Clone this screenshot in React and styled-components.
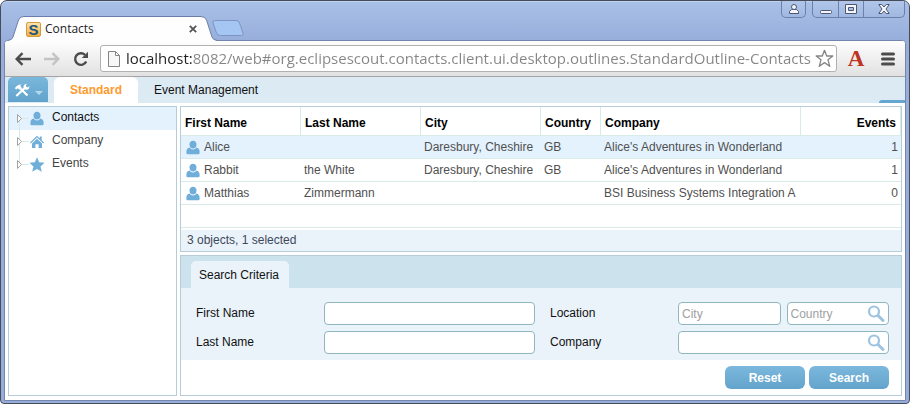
import React from "react";
import styled, { createGlobalStyle } from "styled-components";

const GlobalStyle = createGlobalStyle`
  *, *::before, *::after { box-sizing: border-box; }
  body { margin: 0; background: #fff; font: 12px/16px "Liberation Sans", Arial, sans-serif; color: #111; }
  button, input { font: inherit; }
  ul { margin: 0; padding: 0; list-style: none; }
  svg { display: block; flex: none; }
`;

/* ---------- browser window ---------- */

const Window = styled.div`
  display: flex;
  flex-direction: column;
  min-height: 100vh;
  padding: 0 3px 2px;
  border: 1px solid #474c58;
  border-radius: 7px 7px 4px 4px;
  background: linear-gradient(#a9c1e7, #97aedb 40px, #96addb);
  box-shadow: inset 0 1px #c0d3f0;
`;

const TitleBar = styled.header`
  display: flex;
  justify-content: space-between;
  height: 39px;
`;

const TabStrip = styled.div`
  display: flex;
  align-self: flex-end;
  align-items: flex-end;
  position: relative;
  z-index: 1;
  margin: 0 0 -1px 4px;
`;

const BrowserTab = styled.div`
  display: flex;
  height: 25px;
`;

const TabFace = styled.div`
  display: flex;
  align-items: center;
  width: 177px;
  border-top: 1px solid #6c7da8;
  background: linear-gradient(#fff, #fdfdfd);
  font: 12px/16px "Open Sans", "Noto Sans", sans-serif;
  color: #222;
`;

const Favicon = styled.span`
  width: 15px;
  height: 15px;
  margin: 0 4px 0 2px;
  border: 1px solid #d39a3c;
  border-radius: 2px;
  background: linear-gradient(#fbe3ae, #f2ae3d);
  color: #1d5580;
  font: bold 15px/13px "Liberation Sans", Arial, sans-serif;
  text-align: center;
`;

const PlainButton = styled.button`
  display: flex;
  align-items: center;
  justify-content: center;
  flex: none;
  padding: 0;
  border: 0;
  background: none;
`;

const CloseTab = styled(PlainButton)`
  width: 16px;
  height: 16px;
  margin-left: auto;
`;

const NewTab = styled(PlainButton)`
  height: 25px;
  margin-left: -6px;
`;

const WindowControls = styled.div`
  display: flex;
  gap: 6px;
  padding-right: 1px;
`;

const ControlGroup = styled.div`
  display: flex;
  height: 17px;
  border: 1px solid #6d80aa;
  border-top: 0;
  border-radius: 0 0 5px 5px;
  background: linear-gradient(#b1c6e9, #a0b8e1);
`;

const ControlButton = styled(PlainButton)`
  width: ${(p) => p.$width}px;
  & + & { border-left: 1px solid #6d80aa; }
`;

const Client = styled.div`
  display: flex;
  flex-direction: column;
  flex: 1;
  border: 1px solid #7586ae;
  border-radius: 4px 4px 0 0;
  background: #fff;
  overflow: hidden;
`;

const Toolbar = styled.div`
  display: flex;
  align-items: center;
  height: 36px;
  padding: 0 10px;
  border-bottom: 1px solid #a4a5a4;
  background: linear-gradient(#fefefe, #e1e1e1);
`;

const NavButtons = styled.div`
  display: flex;
  gap: 13px;
  margin-right: 11px;
`;

const AddressBox = styled.div`
  display: flex;
  align-items: center;
  flex: 1;
  min-width: 0;
  height: 27px;
  padding: 0 2px 0 7px;
  border: 1px solid #b1b1b1;
  border-radius: 3px;
  background: #fff;
`;

const AddressInput = styled.input`
  flex: 1;
  min-width: 0;
  height: 25px;
  margin-left: 6px;
  padding: 0;
  border: 0;
  outline: 0;
  background: linear-gradient(90deg, #222 67px, #858585 67px) text;
  color: transparent;
  font: 15px/25px "Open Sans", "Noto Sans", sans-serif;
`;

const Extension = styled(PlainButton)`
  width: 18px;
  margin: 0 16px 0 10px;
  color: #bf3420;
  font: bold 23px/24px "Liberation Serif", "Times New Roman", serif;
`;

/* ---------- application ---------- */

const AppBar = styled.nav`
  display: flex;
  height: 26px;
  padding-left: 3px;
  background: #dceaf4;
`;

const ToolsButton = styled(PlainButton)`
  gap: 5px;
  width: 40px;
  height: 25px;
  margin-right: 6px;
  border-radius: 5px 5px 0 0;
  background: linear-gradient(#7ab7dc, #62a3cc);
`;

const OutlineTab = styled.button`
  padding: 0 16px;
  border: 0;
  border-radius: 6px 6px 0 0;
  background: ${(p) => (p.$active ? "#fff" : "transparent")};
  color: ${(p) => (p.$active ? "#fe9a2e" : "#111")};
  font-weight: ${(p) => (p.$active ? "bold" : "normal")};
`;

const BarHandle = styled.span`
  align-self: flex-end;
  width: 26px;
  height: 3px;
  margin-left: auto;
  border-radius: 3px 0 0 0;
  background: #65a7d1;
`;

const Workspace = styled.main`
  display: grid;
  grid-template-columns: 169px minmax(0, 1fr);
  gap: 3px;
  flex: 1;
  padding: 3px 3px 4px;
`;

const Panel = styled.section`
  border: 1px solid #b8cbd9;
  background: #fff;
`;

const MainColumn = styled.div`
  display: flex;
  flex-direction: column;
  gap: 3px;
`;

const TreeItem = styled.li`
  display: flex;
  align-items: center;
  height: 23px;
  padding-left: 7px;
  background: ${(p) => (p.$selected ? "#e4f2fe" : "transparent")};
  color: ${(p) => (p.$selected ? "#111" : "#444")};
`;

const TreeLabel = styled.span`
  margin-left: 8px;
  padding-bottom: 3px;
`;

const Table = styled.table`
  width: 100%;
  table-layout: fixed;
  border-collapse: separate;
  border-spacing: 0;
`;

const Col = styled.col`
  width: ${(p) => (p.$width ? p.$width + "px" : "auto")};
`;

const HeadCell = styled.th`
  height: 29px;
  padding: 3px 4px 0;
  border-right: 1px solid #d8ebe8;
  border-bottom: 1px solid #d8ebe8;
  text-align: ${(p) => (p.$right ? "right" : "left")};
  color: #000;
`;

const Row = styled.tr`
  background: ${(p) => (p.$selected ? "#e4f2fe" : "#fff")};
`;

const Cell = styled.td`
  height: 23px;
  padding: 0 3px;
  border-bottom: 1px solid #d8ebe8;
  color: #505050;
  white-space: nowrap;
  &:first-child { padding-left: 5px; }
`;

const CellText = styled.div`
  display: flex;
  align-items: center;
  gap: 4px;
  justify-content: ${(p) => (p.$right ? "flex-end" : "flex-start")};
  overflow: hidden;
`;

const Status = styled.div`
  margin-top: 2px;
  padding: 2px 6px 3px;
  background: #eaf3fa;
  color: #40485a;
`;

const SearchPanel = styled(Panel)`
  flex: 1;
`;

const TabBand = styled.div`
  display: flex;
  align-items: flex-end;
  height: 32px;
  padding-left: 10px;
  background: #cce2ed;
`;

const FormTab = styled.button`
  height: 27px;
  padding: 0 10px 0 8px;
  border: 0;
  border-radius: 5px 5px 0 0;
  background: #eaf3fa;
  color: #111;
`;

const Form = styled.form`
  display: flex;
  flex-direction: column;
`;

const Fields = styled.div`
  display: grid;
  grid-template-columns: 1fr 1fr;
  gap: 6px 15px;
  padding: 14px 12px 6px 15px;
  background: #eaf3fa;
`;

const FieldRow = styled.div`
  display: grid;
  grid-template-columns: 128px minmax(0, 1fr);
`;

const FieldLabel = styled.label`
  line-height: 22px;
`;

const Pair = styled.div`
  display: grid;
  grid-template-columns: minmax(0, 1fr) minmax(0, 1fr);
  gap: 6px;
`;

const InputBox = styled.div`
  display: flex;
  align-items: center;
  height: 23px;
  padding: 0 3px;
  border: 1px solid #8fb6c1;
  border-radius: 4px;
  background: #fff;
`;

const TextInput = styled.input`
  flex: 1;
  min-width: 0;
  height: 20px;
  padding: 0;
  border: 0;
  outline: 0;
  background: none;
  &::placeholder { color: #a0a0a0; opacity: 1; }
`;

const Actions = styled.div`
  display: flex;
  justify-content: flex-end;
  gap: 4px;
  padding: 6px 12px 5px;
`;

const ActionButton = styled.button`
  width: 80px;
  height: 23px;
  padding: 0;
  border: 0;
  border-radius: 6px;
  background: linear-gradient(#7cb8dd, #63a3cb);
  color: #fff;
  font-weight: bold;
`;

/* ---------- icons ---------- */

const BLUE = "#70aeda";

const PersonIcon = () => (
  <svg width="14" height="15" viewBox="0 0 14 15" fill={BLUE} aria-hidden="true">
    <path d="M7 .8C4.600.8 3.500 2.500 3.500 4.700 3.500 6.900 5 8.600 7 8.600S10.500 6.900 10.500 4.700C10.500 2.500 9.400.8 7 .8Z" />
    <path d="M3.600 7.500C1.800 7.900.4 9.300.4 11.500V13Q.4 14.200 1.700 14.200H12.300Q13.600 14.200 13.600 13V11.500C13.600 9.300 12.200 7.900 10.400 7.500 9.600 8.800 8.400 9.500 7 9.500S4.400 8.800 3.600 7.500Z" />
  </svg>
);

const HomeIcon = () => (
  <svg width="14" height="15" viewBox="0 0 14 15" fill={BLUE} aria-hidden="true">
    <path d="M7 1.800 9.700 4.400V2.600H11.700V6.300L14 8.600 13.200 9.400 7 3.500.8 9.400 0 8.600Z" />
    <path d="M7 4.800 12 9.600V14H8.600V10.200H5.400V14H2V9.600Z" />
  </svg>
);

const StarIcon = () => (
  <svg width="16" height="15" viewBox="0 0 16 15" fill={BLUE} aria-hidden="true">
    <path d="M8 .2 10.200 5.300 15.600 5.800 11.500 9.400 12.800 14.800 8 11.900 3.200 14.800 4.500 9.400.4 5.800 5.800 5.300Z" />
  </svg>
);

const IconSlot = styled.span`
  display: flex;
  justify-content: center;
  width: 16px;
  margin: 0 -1px;
`;

const Expander = ({ first, last }) => (
  <svg width="14" height="23" viewBox="0 0 14 23" aria-hidden="true">
    <path d={`M3.500 ${first ? 12 : 0}V${last ? 12 : 23}M6 11.500H13`} stroke="#d6eae8" fill="none" />
    <path d="M1.500 7.500V15.500L5.500 11.500Z" fill="#fff" stroke="#a3a3a3" />
  </svg>
);

const LensIcon = () => (
  <svg width="18" height="18" viewBox="0 0 18 18" fill="none" stroke="#9dc3e0" aria-hidden="true">
    <circle cx="7" cy="6.500" r="5" strokeWidth="2.200" />
    <path d="M11 10.500 16 15.500" strokeWidth="3" strokeLinecap="round" />
  </svg>
);

const ToolsIcon = () => (
  <svg width="16" height="14" viewBox="0 0 16 14" fill="none" stroke="#fff" aria-hidden="true">
    <path d="M6.500 5.500 13.500 12.500" strokeWidth="2.200" />
    <path d="M.8 5.200 2.200 3.600Q4.300 1.200 7.500 1.500L6.300 2.600 7.500 4.700 5.500 6.800 3.800 5.200 2.300 6.600Z" fill="#fff" stroke="none" />
    <path d="M2.300 13 10.500 5.200" strokeWidth="2.200" />
    <path d="M12.800.8 11.700 3 13.300 4.400 15.300 3.200Q15.500 6.300 12.700 6.700 9.500 6.800 9.500 4.100 9.700 1.200 12.800.8Z" fill="#fff" stroke="none" />
  </svg>
);

const BackIcon = ({ color, flip }) => (
  <svg width="16" height="14" viewBox="0 0 16 14" fill="none" stroke={color} strokeWidth="2.400" aria-hidden="true">
    <path d={flip ? "M0 7H14M8.500 1.200 14.300 7 8.500 12.800" : "M16 7H2M7.500 1.200 1.700 7 7.500 12.800"} />
  </svg>
);

const ReloadIcon = () => (
  <svg width="16" height="16" viewBox="0 0 16 16" aria-hidden="true">
    <path d="M13.200 10.500A5.800 5.800 0 1 1 12 3.900" fill="none" stroke="#4c4c4c" strokeWidth="2.400" />
    <path d="M15 .8V7H8.800Z" fill="#4c4c4c" />
  </svg>
);

const PageIcon = () => (
  <svg width="12" height="16" viewBox="0 0 12 16" fill="#f7f7f7" stroke="#858585" aria-hidden="true">
    <path d="M.5.5H7.500L11.500 4.500V15.500H.5ZM7.500.5V4.500H11.500" />
  </svg>
);

const BookmarkIcon = () => (
  <svg width="19" height="19" viewBox="0 0 19 19" fill="#fff" stroke="#858585" strokeWidth="1.300" strokeLinejoin="round" aria-hidden="true">
    <path d="M9.500 1.300 11.700 7H17.800L13 10.800 14.800 17.300 9.500 13.600 4.200 17.300 6 10.800 1.200 7H7.300Z" />
  </svg>
);

const MenuIcon = () => (
  <svg width="14" height="14" viewBox="0 0 14 14" stroke="#4c4c4c" strokeWidth="3" strokeLinecap="round" aria-hidden="true">
    <path d="M1.500 2H12.500M1.500 7H12.500M1.500 12H12.500" />
  </svg>
);

const TabEdge = ({ right }) => (
  <svg width="16" height="25" viewBox="0 0 16 25" aria-hidden="true">
    <g transform={right ? "matrix(-1 0 0 1 16 0)" : undefined}>
      <path d="M0 24.500Q4 24 5 21L10.500 4Q11.800.5 16 .5V25H0Z" fill="#fefefe" />
      <path d="M0 24.500Q4 24 5 21L10.500 4Q11.800.5 16 .5" fill="none" stroke="#6c7da8" />
    </g>
  </svg>
);

const glyph = { fill: "#f4f6fb", stroke: "#4d5770" };

const UserGlyph = () => (
  <svg width="12" height="12" viewBox="0 0 12 12" {...glyph} aria-hidden="true">
    <path d="M1.500 10.500V8.500L3.500 6.500H8.500L10.500 8.500V10.500Z" />
    <circle cx="6" cy="4" r="2.500" />
  </svg>
);

const MinimizeGlyph = () => (
  <svg width="12" height="12" viewBox="0 0 12 12" {...glyph} aria-hidden="true">
    <rect x=".5" y="7.500" width="11" height="3" rx="1" />
  </svg>
);

const MaximizeGlyph = () => (
  <svg width="12" height="12" viewBox="0 0 12 12" {...glyph} aria-hidden="true">
    <path fillRule="evenodd" d="M.5 1.500H11.500V10.500H.5ZM3.500 4.500V7.500H8.500V4.500Z" />
  </svg>
);

const CloseGlyph = () => (
  <svg width="12" height="12" viewBox="0 0 12 12" {...glyph} aria-hidden="true">
    <path d="M.8 1.500H3.800L6 4 8.200 1.500H11.200L8 6 11.200 10.500H8.200L6 8 3.800 10.500H.8L4 6Z" />
  </svg>
);

/* ---------- data ---------- */

const outline = [
  { label: "Contacts", Icon: PersonIcon },
  { label: "Company", Icon: HomeIcon },
  { label: "Events", Icon: StarIcon },
];

const columns = [
  { label: "First Name", width: 120 },
  { label: "Last Name", width: 120 },
  { label: "City", width: 120 },
  { label: "Country", width: 60 },
  { label: "Company", width: 200 },
  { label: "Events", right: true },
];

const people = [
  ["Alice", "", "Daresbury, Cheshire", "GB", "Alice's Adventures in Wonderland", "1"],
  ["Rabbit", "the White", "Daresbury, Cheshire", "GB", "Alice's Adventures in Wonderland", "1"],
  ["Matthias", "Zimmermann", "", "", "BSI Business Systems Integration A", "0"],
];

function BrowserChrome() {
  return (
    <TitleBar>
      <TabStrip>
        <BrowserTab>
          <TabEdge />
          <TabFace>
            <Favicon aria-hidden="true">S</Favicon>
            Contacts
            <CloseTab aria-label="Close tab">
              <svg width="8" height="8" viewBox="0 0 8 8" stroke="#555" strokeWidth="1.800" aria-hidden="true">
                <path d="M.8.8 7.200 7.200M7.200.8.8 7.200" />
              </svg>
            </CloseTab>
          </TabFace>
          <TabEdge right />
        </BrowserTab>
        <NewTab aria-label="New tab">
          <svg width="34" height="17" viewBox="0 0 34 17" fill="#a5c6f2" stroke="#7d94c4" aria-hidden="true">
            <path d="M4 .5H25Q27.500.5 28.500 3L32 13Q33 15.500 30.500 15.500H9.500Q6.500 15.500 5.500 13L2 3Q1.300.5 4 .5Z" />
          </svg>
        </NewTab>
      </TabStrip>
      <WindowControls>
        <ControlGroup>
          <ControlButton $width={23} aria-label="User"><UserGlyph /></ControlButton>
        </ControlGroup>
        <ControlGroup>
          <ControlButton $width={25} aria-label="Minimize"><MinimizeGlyph /></ControlButton>
          <ControlButton $width={25} aria-label="Maximize"><MaximizeGlyph /></ControlButton>
          <ControlButton $width={41} aria-label="Close"><CloseGlyph /></ControlButton>
        </ControlGroup>
      </WindowControls>
    </TitleBar>
  );
}

function AddressBar() {
  return (
    <Toolbar>
      <NavButtons>
        <PlainButton aria-label="Back"><BackIcon color="#4c4c4c" /></PlainButton>
        <PlainButton aria-label="Forward"><BackIcon color="#c3c3c3" flip /></PlainButton>
        <PlainButton aria-label="Reload"><ReloadIcon /></PlainButton>
      </NavButtons>
      <AddressBox>
        <PageIcon />
        <AddressInput
          aria-label="Address"
          defaultValue="localhost:8082/web#org.eclipsescout.contacts.client.ui.desktop.outlines.StandardOutline-Contacts"
        />
        <PlainButton aria-label="Bookmark"><BookmarkIcon /></PlainButton>
      </AddressBox>
      <Extension>A</Extension>
      <PlainButton aria-label="Menu"><MenuIcon /></PlainButton>
    </Toolbar>
  );
}

function OutlineTree() {
  return (
    <Panel>
      <ul role="tree" aria-label="Outline">
        {outline.map(({ label, Icon }, i) => (
          <TreeItem key={label} role="treeitem" aria-selected={i === 0} $selected={i === 0}>
            <Expander first={i === 0} last={i === outline.length - 1} />
            <IconSlot><Icon /></IconSlot>
            <TreeLabel>{label}</TreeLabel>
          </TreeItem>
        ))}
      </ul>
    </Panel>
  );
}

function ContactsTable() {
  return (
    <Panel>
      <Table>
        <colgroup>
          {columns.map((c) => <Col key={c.label} $width={c.width} />)}
        </colgroup>
        <thead>
          <tr>
            {columns.map((c) => (
              <HeadCell key={c.label} scope="col" $right={c.right}>{c.label}</HeadCell>
            ))}
          </tr>
        </thead>
        <tbody>
          {people.map((person, r) => (
            <Row key={person[0]} $selected={r === 0}>
              {person.map((value, c) => (
                <Cell key={c}>
                  <CellText $right={columns[c].right}>
                    {c === 0 && <PersonIcon />}
                    {value}
                  </CellText>
                </Cell>
              ))}
            </Row>
          ))}
          <Row><Cell colSpan={columns.length} /></Row>
        </tbody>
      </Table>
      <Status>3 objects, 1 selected</Status>
    </Panel>
  );
}

function SearchForm() {
  return (
    <SearchPanel>
      <TabBand><FormTab type="button">Search Criteria</FormTab></TabBand>
      <Form onSubmit={(e) => e.preventDefault()}>
        <Fields>
          <FieldRow>
            <FieldLabel htmlFor="first">First Name</FieldLabel>
            <InputBox><TextInput id="first" /></InputBox>
          </FieldRow>
          <FieldRow>
            <FieldLabel htmlFor="city">Location</FieldLabel>
            <Pair>
              <InputBox><TextInput id="city" placeholder="City" /></InputBox>
              <InputBox>
                <TextInput aria-label="Country" placeholder="Country" />
                <PlainButton type="button" aria-label="Find country"><LensIcon /></PlainButton>
              </InputBox>
            </Pair>
          </FieldRow>
          <FieldRow>
            <FieldLabel htmlFor="last">Last Name</FieldLabel>
            <InputBox><TextInput id="last" /></InputBox>
          </FieldRow>
          <FieldRow>
            <FieldLabel htmlFor="company">Company</FieldLabel>
            <InputBox>
              <TextInput id="company" />
              <PlainButton type="button" aria-label="Find company"><LensIcon /></PlainButton>
            </InputBox>
          </FieldRow>
        </Fields>
        <Actions>
          <ActionButton type="reset">Reset</ActionButton>
          <ActionButton type="submit">Search</ActionButton>
        </Actions>
      </Form>
    </SearchPanel>
  );
}

export default function App() {
  return (
    <>
      <GlobalStyle />
      <Window>
        <BrowserChrome />
        <Client>
          <AddressBar />
          <AppBar>
            <ToolsButton aria-label="Tools">
              <ToolsIcon />
              <svg width="8" height="12" viewBox="0 0 8 12" fill="#b5d8ee" aria-hidden="true">
                <path d="M0 7H8L4 11Z" />
              </svg>
            </ToolsButton>
            <OutlineTab $active>Standard</OutlineTab>
            <OutlineTab>Event Management</OutlineTab>
            <BarHandle />
          </AppBar>
          <Workspace>
            <OutlineTree />
            <MainColumn>
              <ContactsTable />
              <SearchForm />
            </MainColumn>
          </Workspace>
        </Client>
      </Window>
    </>
  );
}
